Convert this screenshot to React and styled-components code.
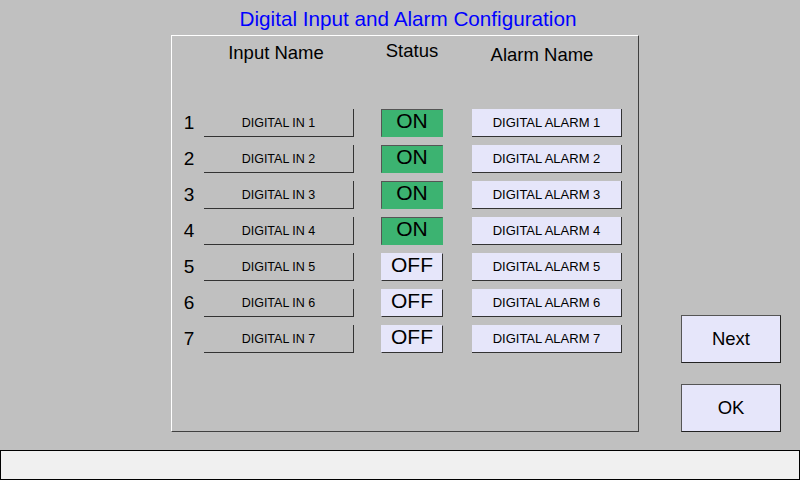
import React from 'react';
import styled, { createGlobalStyle } from 'styled-components';

const GlobalStyle = createGlobalStyle`
  * { box-sizing: border-box; }
  body {
    margin: 0;
    background: #c0c0c0;
    font-family: "Liberation Sans", Arial, sans-serif;
  }
`;

const Screen = styled.div`
  width: 800px;
  height: 480px;
  display: flex;
  flex-direction: column;
  background: #c0c0c0;
  overflow: hidden;
`;

const Title = styled.div`
  height: 35px;
  padding: 7px 0 0 16px;
  text-align: center;
  color: #0000ff;
  font-size: 20.7px;
  line-height: 24px;
`;

const Main = styled.div`
  display: flex;
  align-items: flex-end;
  padding-left: 171px;
  height: 397px;
`;

const Panel = styled.div`
  width: 468px;
  height: 397px;
  border-top: 1px solid #ffffff;
  border-left: 1px solid #ffffff;
  border-right: 1px solid #404040;
  border-bottom: 1px solid #404040;
  display: flex;
  flex-direction: column;
`;

// number | input name | status | alarm name
const Grid = styled.div`
  display: grid;
  grid-template-columns: 32px 177px 91px 150px;
  align-items: center;
  justify-items: start;
`;

const HeaderRow = styled(Grid)`
  margin-top: 6px;
  height: 22px;
`;

const Header = styled.div`
  width: ${p => p.w}px;
  position: relative;
  top: ${p => p.dy || 0}px;
  left: ${p => p.dx || 0}px;
  text-align: center;
  font-size: 18.5px;
  line-height: 22px;
  color: #000;
  white-space: nowrap;
`;

const Rows = styled.div`
  margin-top: 45px;
  display: flex;
  flex-direction: column;
  gap: 8px;
`;

const Row = styled(Grid)`
  height: 28px;
`;

const Num = styled.div`
  width: 32px;
  padding-left: 2px;
  text-align: center;
  font-size: 19px;
  color: #000;
`;

const NameBox = styled.div`
  width: 150px;
  height: 28px;
  display: flex;
  align-items: center;
  justify-content: center;
  font-size: ${p => (p.alarm ? 13 : 12.5)}px;
  color: #000;
  white-space: nowrap;
  border-right: 1px solid #333;
  border-bottom: 1px solid #333;
  background: ${p => (p.alarm ? '#e6e6fa' : 'transparent')};
`;

const StatusBox = styled.div`
  width: 62px;
  height: 28px;
  display: flex;
  align-items: center;
  justify-content: center;
  padding-bottom: 4px;
  font-size: 21px;
  color: #000;
  background: ${p => (p.on ? '#3cb371' : '#e6e6fa')};
  border-top: 1px solid ${p => (p.on ? '#555' : '#e6e6fa')};
  border-left: 1px solid ${p => (p.on ? '#555' : '#e6e6fa')};
  border-right: 1px solid ${p => (p.on ? '#3cb371' : '#333')};
  border-bottom: 1px solid ${p => (p.on ? '#3cb371' : '#333')};
`;

const Side = styled.div`
  margin-left: 42px;
  display: flex;
  flex-direction: column;
  gap: 21px;
`;

const Button = styled.button`
  width: 100px;
  height: 48px;
  background: #e6e6fa;
  border-top: 1px solid #555;
  border-left: 1px solid #555;
  border-right: 1px solid #222;
  border-bottom: 1px solid #222;
  font-family: "Liberation Sans", Arial, sans-serif;
  font-size: 18.5px;
  color: #000;
  padding: 0;
`;

const StatusBar = styled.div`
  margin-top: 18px;
  height: 30px;
  border: 1px solid #000;
  background: #f0f0f0;
`;

const inputs = [1, 2, 3, 4, 5, 6, 7].map(n => ({
  n,
  name: `DIGITAL IN ${n}`,
  alarm: `DIGITAL ALARM ${n}`,
  on: n <= 4,
}));

export default function App() {
  return (
    <>
      <GlobalStyle />
      <Screen>
        <Title>Digital Input and Alarm Configuration</Title>
        <Main>
          <Panel>
            <HeaderRow>
              <span />
              <Header w={150} dx={-3}>Input Name</Header>
              <Header w={62} dy={-2}>Status</Header>
              <Header w={150} dx={-5} dy={2}>Alarm Name</Header>
            </HeaderRow>
            <Rows>
              {inputs.map(item => (
                <Row key={item.n}>
                  <Num>{item.n}</Num>
                  <NameBox>{item.name}</NameBox>
                  <StatusBox on={item.on}>{item.on ? 'ON' : 'OFF'}</StatusBox>
                  <NameBox alarm>{item.alarm}</NameBox>
                </Row>
              ))}
            </Rows>
          </Panel>
          <Side>
            <Button>Next</Button>
            <Button>OK</Button>
          </Side>
        </Main>
        <StatusBar />
      </Screen>
    </>
  );
}
